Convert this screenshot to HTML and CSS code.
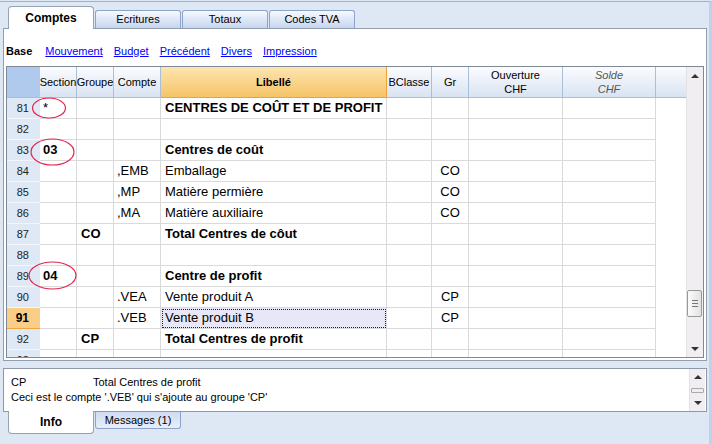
FILE: index.html
```html
<!DOCTYPE html>
<html lang="fr">
  <head>
    <meta charset="UTF-8" />
    <title>Comptes</title>
    <link rel="stylesheet" href="styles.css">
  </head>
  <body>
    <div class="win">
      <!-- onglets du haut -->
      <ul class="tabs">
        <li class="on">Comptes</li>
        <li>Ecritures</li>
        <li>Totaux</li>
        <li>Codes TVA</li>
      </ul>

      <div class="panel">
        <!-- vues -->
        <nav class="views">
          <b>Base</b>
          <a href="#">Mouvement</a>
          <a href="#">Budget</a>
          <a href="#">Précédent</a>
          <a href="#">Divers</a>
          <a href="#">Impression</a>
        </nav>

        <!-- tableau -->
        <div class="grid">
          <div class="table">
            <div class="row head">
              <div class="c n"></div>
              <div class="c sec">Section</div>
              <div class="c grp">Groupe</div>
              <div class="c cpt">Compte</div>
              <div class="c lib">Libellé</div>
              <div class="c bc">BClasse</div>
              <div class="c gr">Gr</div>
              <div class="c ouv">Ouverture<br>CHF</div>
              <div class="c sol"><i>Solde<br>CHF</i></div>
              <div class="c fil"></div>
            </div>

            <div class="row">
              <div class="c n">81</div>
              <div class="c sec">*</div>
              <div class="c grp"></div>
              <div class="c cpt"></div>
              <div class="c lib b">CENTRES DE COÛT ET DE PROFIT</div>
              <div class="c bc"></div>
              <div class="c gr"></div>
              <div class="c ouv"></div>
              <div class="c sol"></div>
              <div class="c fil"></div>
            </div>
            <div class="row">
              <div class="c n">82</div>
              <div class="c sec"></div>
              <div class="c grp"></div>
              <div class="c cpt"></div>
              <div class="c lib"></div>
              <div class="c bc"></div>
              <div class="c gr"></div>
              <div class="c ouv"></div>
              <div class="c sol"></div>
              <div class="c fil"></div>
            </div>
            <div class="row">
              <div class="c n">83</div>
              <div class="c sec b">03</div>
              <div class="c grp"></div>
              <div class="c cpt"></div>
              <div class="c lib b">Centres de coût</div>
              <div class="c bc"></div>
              <div class="c gr"></div>
              <div class="c ouv"></div>
              <div class="c sol"></div>
              <div class="c fil"></div>
            </div>
            <div class="row">
              <div class="c n">84</div>
              <div class="c sec"></div>
              <div class="c grp"></div>
              <div class="c cpt">,EMB</div>
              <div class="c lib">Emballage</div>
              <div class="c bc"></div>
              <div class="c gr">CO</div>
              <div class="c ouv"></div>
              <div class="c sol"></div>
              <div class="c fil"></div>
            </div>
            <div class="row">
              <div class="c n">85</div>
              <div class="c sec"></div>
              <div class="c grp"></div>
              <div class="c cpt">,MP</div>
              <div class="c lib">Matière permière</div>
              <div class="c bc"></div>
              <div class="c gr">CO</div>
              <div class="c ouv"></div>
              <div class="c sol"></div>
              <div class="c fil"></div>
            </div>
            <div class="row">
              <div class="c n">86</div>
              <div class="c sec"></div>
              <div class="c grp"></div>
              <div class="c cpt">,MA</div>
              <div class="c lib">Matière auxiliaire</div>
              <div class="c bc"></div>
              <div class="c gr">CO</div>
              <div class="c ouv"></div>
              <div class="c sol"></div>
              <div class="c fil"></div>
            </div>
            <div class="row">
              <div class="c n">87</div>
              <div class="c sec"></div>
              <div class="c grp b">CO</div>
              <div class="c cpt"></div>
              <div class="c lib b">Total Centres de côut</div>
              <div class="c bc"></div>
              <div class="c gr"></div>
              <div class="c ouv"></div>
              <div class="c sol"></div>
              <div class="c fil"></div>
            </div>
            <div class="row">
              <div class="c n">88</div>
              <div class="c sec"></div>
              <div class="c grp"></div>
              <div class="c cpt"></div>
              <div class="c lib"></div>
              <div class="c bc"></div>
              <div class="c gr"></div>
              <div class="c ouv"></div>
              <div class="c sol"></div>
              <div class="c fil"></div>
            </div>
            <div class="row">
              <div class="c n">89</div>
              <div class="c sec b">04</div>
              <div class="c grp"></div>
              <div class="c cpt"></div>
              <div class="c lib b">Centre de profit</div>
              <div class="c bc"></div>
              <div class="c gr"></div>
              <div class="c ouv"></div>
              <div class="c sol"></div>
              <div class="c fil"></div>
            </div>
            <div class="row">
              <div class="c n">90</div>
              <div class="c sec"></div>
              <div class="c grp"></div>
              <div class="c cpt">.VEA</div>
              <div class="c lib">Vente produit A</div>
              <div class="c bc"></div>
              <div class="c gr">CP</div>
              <div class="c ouv"></div>
              <div class="c sol"></div>
              <div class="c fil"></div>
            </div>
            <div class="row cur">
              <div class="c n">91</div>
              <div class="c sec"></div>
              <div class="c grp"></div>
              <div class="c cpt">.VEB</div>
              <div class="c lib sel">Vente produit B</div>
              <div class="c bc"></div>
              <div class="c gr">CP</div>
              <div class="c ouv"></div>
              <div class="c sol"></div>
              <div class="c fil"></div>
            </div>
            <div class="row">
              <div class="c n">92</div>
              <div class="c sec"></div>
              <div class="c grp b">CP</div>
              <div class="c cpt"></div>
              <div class="c lib b">Total Centres de profit</div>
              <div class="c bc"></div>
              <div class="c gr"></div>
              <div class="c ouv"></div>
              <div class="c sol"></div>
              <div class="c fil"></div>
            </div>
            <div class="row">
              <div class="c n">93</div>
              <div class="c sec"></div>
              <div class="c grp"></div>
              <div class="c cpt"></div>
              <div class="c lib"></div>
              <div class="c bc"></div>
              <div class="c gr"></div>
              <div class="c ouv"></div>
              <div class="c sol"></div>
              <div class="c fil"></div>
            </div>
          </div>

          <!-- barre de défilement -->
          <div class="vs">
            <div class="vs-btn"><span class="up"></span></div>
            <div class="vs-track">
              <div class="thumb"><i></i><i></i><i></i></div>
            </div>
            <div class="vs-btn"><span class="down"></span></div>
          </div>
        </div>
      </div>

      <!-- info -->
      <div class="info">
        <div class="info-txt">
          <div><span class="info-key">CP</span>Total Centres de profit</div>
          <div>Ceci est le compte '.VEB' qui s'ajoute au groupe 'CP'</div>
        </div>
        <div class="vs small">
          <div class="vs-btn"><span class="up"></span></div>
          <div class="thumb-s"></div>
          <div class="vs-btn"><span class="down"></span></div>
        </div>
      </div>

      <ul class="btabs">
        <li class="on">Info</li>
        <li>Messages (1)</li>
      </ul>

      <!-- cercles rouges -->
      <svg class="marks" width="712" height="444" viewBox="0 0 712 444">
        <ellipse cx="49" cy="108" rx="16.5" ry="10" />
        <ellipse cx="52.5" cy="152" rx="21.5" ry="13" />
        <ellipse cx="52.5" cy="275.5" rx="23.5" ry="13.5" />
      </svg>
    </div>
  </body>
</html>
```

FILE: styles.css
```css
/* reset */
html,
body,
ul {
  margin: 0;
  padding: 0;
}
ul {
  list-style: none;
}
body {
  font-family: "Liberation Sans", Arial, sans-serif;
  font-size: 11px;
  color: #000;
  background: #dde8f4;
}

/* fenetre */
.win {
  position: relative;
  width: 709px;
  height: 442px;
  margin-top: 1px;
  border-top: 1px solid #a6b0be;
  border-right: 3px solid #bcd2ef;
  background: #dde8f4;
  overflow: hidden;
}

/* onglets du haut */
.tabs {
  display: flex;
  align-items: flex-end;
  height: 26px;
  padding-left: 8px;
  position: relative;
  z-index: 1;
}
.tabs li {
  box-sizing: border-box;
  width: 86px;
  height: 18px;
  margin-left: 1px;
  border: 1px solid #8da3c9;
  border-bottom: none;
  border-radius: 3px 3px 0 0;
  background: linear-gradient(#f6f9fe, #c6d6f1);
  text-align: center;
  line-height: 17px;
}
.tabs li.on {
  height: 23px;
  margin-left: 0;
  margin-bottom: -1px;
  border-color: #97a2b1;
  border-radius: 4px 4px 0 0;
  background: #fff;
  font-size: 12px;
  font-weight: bold;
  line-height: 22px;
}

/* panneau principal */
.panel {
  box-sizing: border-box;
  width: 704px;
  height: 333px;
  margin-left: 3px;
  padding: 0 2px 2px;
  border: 1px solid #939eac;
  background: #fff;
}

.views {
  box-sizing: border-box;
  display: flex;
  align-items: center;
  gap: 11px;
  height: 37px;
  padding-top: 6px;
}
.views b {
  margin-right: 2px;
}
.views a {
  color: #0000ff;
}

/* tableau */
.grid {
  display: flex;
  width: 698px;
  height: 292px;
  box-sizing: border-box;
  border: 1px solid #7f8995;
  overflow: hidden;
}
.table {
  width: 680px;
  overflow: hidden;
}
.row {
  display: flex;
  height: 21px;
}
.c {
  box-sizing: border-box;
  flex: none;
  height: 100%;
  padding-left: 4px;
  border-right: 1px solid #dadada;
  border-bottom: 1px solid #dadada;
  font-size: 13px;
  line-height: 20px;
  white-space: nowrap;
  overflow: hidden;
}
.b {
  font-weight: bold;
}
.n {
  width: 33px;
  padding: 0 11px 0 0;
  border-right: none;
  border-bottom-color: #f2f5fa;
  background: #dfe8f5;
  font-size: 11px;
  color: #222;
  text-align: right;
}
.sec { width: 37px; padding-left: 3px; }
.grp { width: 37px; }
.cpt { width: 47px; padding-left: 3px; }
.lib { width: 226px; }
.bc { width: 45px; }
.gr { width: 37px; padding: 0; text-align: center; }
.ouv { width: 94px; }
.sol { width: 93px; }
.fil {
  width: 31px;
  border: none;
}

/* entete */
.head {
  height: 31px;
}
.head .c {
  display: flex;
  align-items: center;
  justify-content: center;
  padding: 0;
  border-color: #a9bfd8;
  background: linear-gradient(#fbfcfe, #d9e3f2);
  font-size: 11px;
  line-height: 14px;
  text-align: center;
}
.head .n {
  border-bottom-color: #a9bfd8;
  background: #afcaed;
}
.head .lib {
  border-color: #f0a135;
  background: linear-gradient(#fde4b0, #f6c467);
  font-weight: bold;
}
.head .fil {
  border: none;
  border-bottom: 1px solid #a9bfd8;
}
.head .sol i {
  color: #555;
}

/* ligne courante */
.cur .n {
  background: #f9cf88;
  border-bottom-color: #f0a43a;
  font-size: 12px;
  font-weight: bold;
  color: #000;
}
.sel {
  background: #e7e7f7;
  outline: 1px dotted #222;
  outline-offset: -2px;
}

/* barre de defilement */
.vs {
  display: flex;
  flex-direction: column;
  width: 16px;
  background: #f1eef1;
  border-left: 1px solid #e4e1e4;
}
.vs-btn {
  display: flex;
  align-items: center;
  justify-content: center;
  height: 17px;
}
.up,
.down {
  width: 0;
  height: 0;
  border-left: 4px solid transparent;
  border-right: 4px solid transparent;
}
.up {
  border-bottom: 4px solid #333;
}
.down {
  border-top: 4px solid #333;
}
.vs-track {
  flex: 1;
}
.thumb {
  box-sizing: border-box;
  display: flex;
  flex-direction: column;
  align-items: center;
  justify-content: center;
  gap: 2px;
  width: 15px;
  height: 27px;
  margin-top: 206px;
  border: 1px solid #999;
  border-radius: 2px;
  background: linear-gradient(90deg, #fbfbfb, #e2e2e2);
}
.thumb i {
  display: block;
  width: 6px;
  height: 1px;
  background: #777;
}

/* info */
.info {
  display: flex;
  box-sizing: border-box;
  width: 704px;
  height: 44px;
  margin: 7px 0 0 3px;
  border: 1px solid #8f98a4;
  background: #fff;
}
.info-txt {
  flex: 1;
  padding: 6px 0 0 7px;
  line-height: 15px;
}
.info-key {
  display: inline-block;
  width: 82px;
}
.vs.small {
  width: 15px;
  margin-right: 1px;
  justify-content: space-between;
}
.small .vs-btn {
  height: 16px;
}
.thumb-s {
  height: 3px;
  margin: 0 1px;
  border: 1px solid #aaa;
  border-radius: 1px;
  background: #eee;
}

/* onglets du bas */
.btabs {
  display: flex;
  align-items: flex-start;
  padding-left: 8px;
}
.btabs li {
  box-sizing: border-box;
  width: 86px;
  height: 17px;
  margin-left: 1px;
  border: 1px solid #8da3c9;
  border-top: none;
  border-radius: 0 0 3px 3px;
  background: linear-gradient(#cddbf3, #e9eff9);
  text-align: center;
  line-height: 16px;
}
.btabs li.on {
  height: 23px;
  margin: -1px 0 0;
  border-color: #97a2b1;
  border-radius: 0 0 4px 4px;
  background: #fff;
  font-size: 12px;
  font-weight: bold;
  line-height: 22px;
}

/* cercles */
.marks {
  position: absolute;
  top: -2px;
  left: 0;
  pointer-events: none;
}
.marks ellipse {
  fill: none;
  stroke: #e2254f;
  stroke-width: 1.2;
}
```
